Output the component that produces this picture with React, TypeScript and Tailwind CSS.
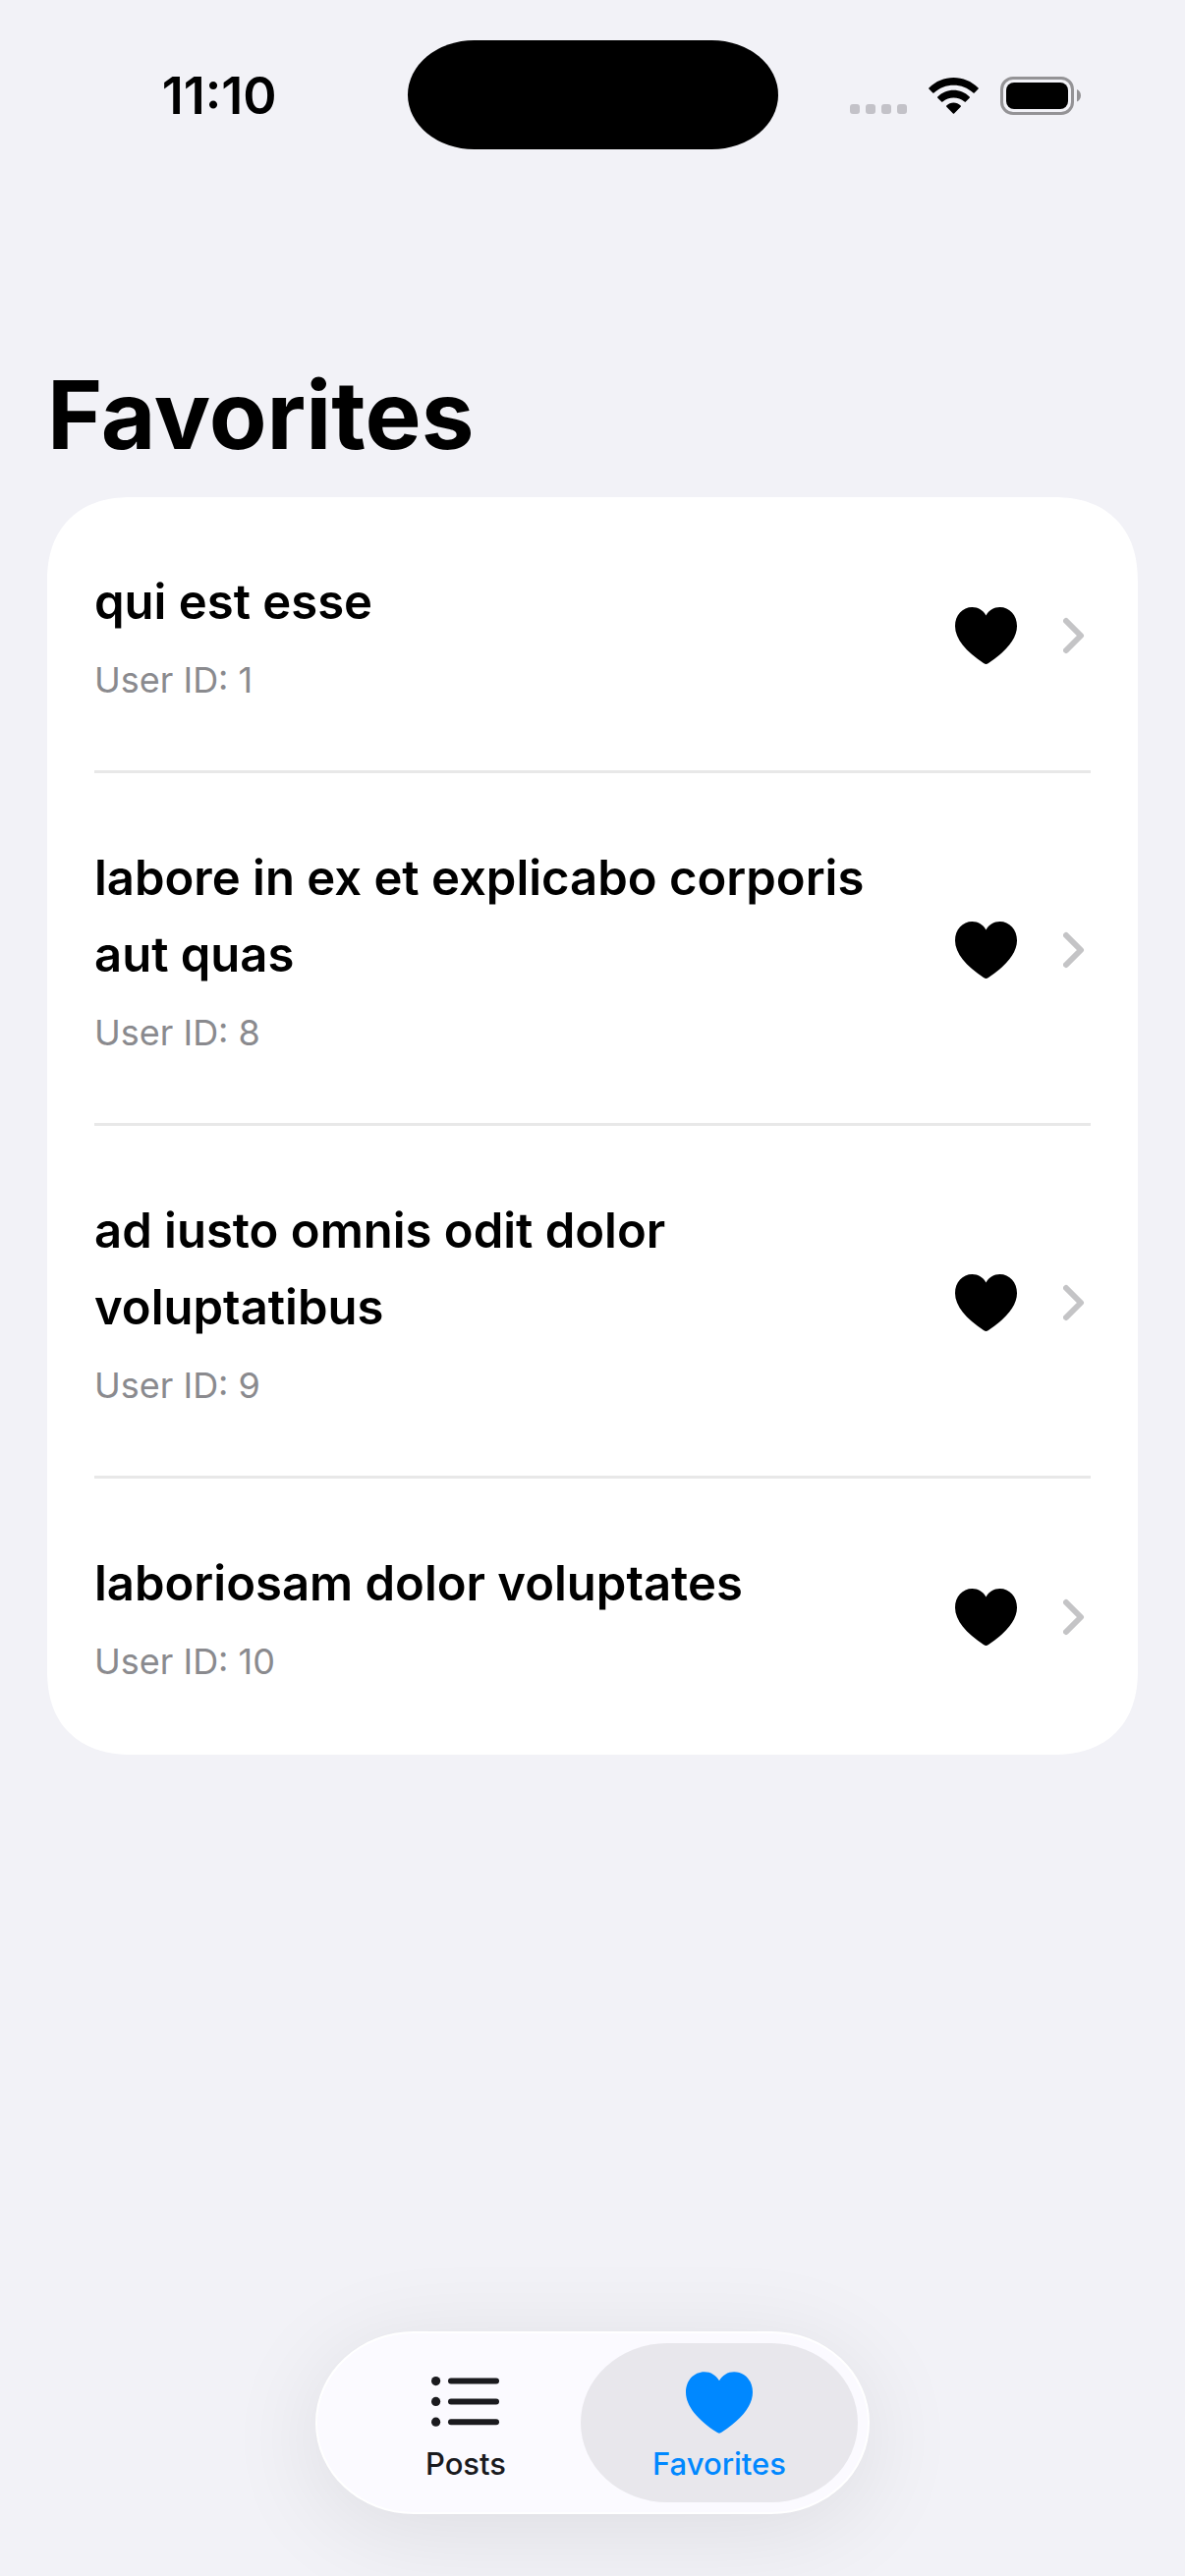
type Post = { title: string; userId: number };

const posts: Post[] = [
  { title: "qui est esse", userId: 1 },
  { title: "labore in ex et explicabo corporis aut quas", userId: 8 },
  { title: "ad iusto omnis odit dolor voluptatibus", userId: 9 },
  { title: "laboriosam dolor voluptates", userId: 10 },
];

function HeartIcon({ className }: { className: string }) {
  return (
    <svg viewBox="0 0 63 58" className={className} fill="currentColor" aria-hidden="true">
      <path d="M31.5 58C30.8 58 30 57.5 29 56.9C11.500 45.500 0 32.500 0 19.300C0 8 7.600 0 17.500 0C23.500 0 28.500 3.100 31.500 8.400C34.500 3.100 39.500 0 45.500 0C55.400 0 63 8 63 19.300C63 32.500 51.500 45.500 34 56.900C33 57.500 32.200 58 31.500 58Z" />
    </svg>
  );
}

function ChevronIcon() {
  return (
    <svg viewBox="0 0 22 38" className="h-[38px] w-[22px] text-[#c4c4c6]" fill="none" stroke="currentColor" strokeWidth="6" strokeLinecap="round" strokeLinejoin="round" aria-hidden="true">
      <path d="M3 4L18 19L3 34" />
    </svg>
  );
}

function ListIcon() {
  return (
    <svg viewBox="0 0 70 52" className="h-[52px] w-[70px]" fill="currentColor" aria-hidden="true">
      {[4.6, 25.4, 46.2].map((y) => (
        <g key={y}>
          <circle cx="4.600" cy={y} r="4.600" />
          <rect x="17" y={y - 3} width="52" height="6" rx="3" />
        </g>
      ))}
    </svg>
  );
}

function WifiIcon() {
  return (
    <svg viewBox="0 0 51 37" className="h-[37px] w-[51px]" fill="currentColor" aria-hidden="true">
      <path d="M.4 11.600Q-.2 11 .4 10.400C7.500 3.600 16 0 25.500 0S43.500 3.600 50.600 10.400Q51.200 11 50.600 11.600L46.700 15.500Q46.100 16.100 45.500 15.500C39.800 10.300 33 7.700 25.500 7.700S11.200 10.300 5.500 15.500Q4.900 16.100 4.300 15.500Z" />
      <path d="M9.300 20.700Q8.700 20.100 9.300 19.500C13.800 15.200 19.400 12.800 25.500 12.800S37.200 15.200 41.700 19.500Q42.300 20.100 41.700 20.700L37.800 24.600Q37.200 25.200 36.600 24.600C33.400 21.900 29.700 20.500 25.500 20.500S17.600 21.900 14.400 24.600Q13.800 25.200 13.200 24.600Z" />
      <path d="M18.300 29.700Q17.700 29.100 18.300 28.500C20.300 26.600 22.800 25.500 25.500 25.500S30.700 26.600 32.700 28.500Q33.300 29.100 32.700 29.700L26.100 36.400Q25.500 37 24.900 36.400Z" />
    </svg>
  );
}

function BatteryIcon() {
  return (
    <svg viewBox="0 0 82 39" className="h-[39px] w-[82px]" aria-hidden="true">
      <rect x="1.500" y="1.500" width="72" height="36" rx="11.500" fill="none" stroke="#949396" strokeWidth="3" />
      <rect x="6" y="6" width="63" height="27" rx="8" />
      <path d="M78 13C80.500 14 82 16.500 82 19.300S80.500 24.600 78 25.600Z" fill="#949396" />
    </svg>
  );
}

function StatusBar() {
  return (
    <header className="flex items-center px-8 pt-[41px]">
      <time className="flex-1 pt-0.5 text-center text-[52px] leading-[60px] font-semibold">11:10</time>
      <div className="h-[111px] w-[377px] rounded-[68px/56px] bg-black" />
      <div className="flex flex-1 items-center justify-center pt-0.5">
        <div className="mt-[26px] flex gap-1.5">
          {[0, 1, 2, 3].map((dot) => (
            <span key={dot} className="size-2.5 rounded-[3px] bg-[#c3c2c8]" />
          ))}
        </div>
        <div className="ml-[22px]">
          <WifiIcon />
        </div>
        <div className="ml-[22px]">
          <BatteryIcon />
        </div>
      </div>
    </header>
  );
}

function PostRow({ post }: { post: Post }) {
  return (
    <li className="flex items-center border-b-[3px] border-[#e8e8e8] pt-[68px] pb-16 last:border-transparent">
      <a href="#post" className="min-w-0 flex-1">
        <h2 className="text-[49px] leading-[78px] font-semibold text-black">{post.title}</h2>
        <p className="mt-3 text-[36px] leading-[56px] text-[#8a8a8e]">User ID: {post.userId}</p>
      </a>
      <button type="button" aria-label="Remove from favorites" className="ml-12 text-black">
        <HeartIcon className="h-[58px] w-[63px]" />
      </button>
      <div className="mr-[6px] ml-[47px]">
        <ChevronIcon />
      </div>
    </li>
  );
}

function TabBar() {
  return (
    <nav className="mx-auto mt-auto mb-[63px] flex -space-x-6 rounded-[100px/93px] border-2 border-white bg-[#fbfaff] p-2.5 shadow-[0_16px_100px_rgba(0,0,0,0.09)]">
      <button type="button" className="flex h-[162px] w-[282px] flex-col items-center pt-[34px] text-[#1a1a1e]">
        <ListIcon />
        <span className="mt-[18px] text-[31px] leading-[38px] font-medium">Posts</span>
      </button>
      <button type="button" aria-current="page" className="flex h-[162px] w-[282px] flex-col items-center rounded-[88px/81px] bg-[#e8e7ec] pt-[29px] text-[#0088ff]">
        <HeartIcon className="h-[63px] w-[68px]" />
        <span className="mt-3 text-[31px] leading-[38px] font-medium">Favorites</span>
      </button>
    </nav>
  );
}

export default function App() {
  return (
    <div className="flex min-h-screen flex-col bg-[#f2f2f7] font-['Inter',sans-serif] text-black">
      <StatusBar />
      <main className="px-12 pt-[210px] pb-12">
        <h1 className="text-[96px] leading-[120px] font-bold">Favorites</h1>
        <ul className="mt-6 rounded-[86px] bg-white px-12 [corner-shape:superellipse(1.2)]">
          {posts.map((post) => (
            <PostRow key={post.userId} post={post} />
          ))}
        </ul>
      </main>
      <TabBar />
    </div>
  );
}
